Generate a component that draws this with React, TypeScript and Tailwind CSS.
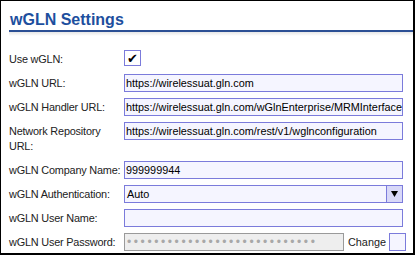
import React from "react";

const font = { fontFamily: '"Liberation Sans", Arial, sans-serif' };

function Row({ label, h = "h-[24px]", children }: { label: React.ReactNode; h?: string; children: React.ReactNode }) {
  return (
    <div className={`flex items-start ${h}`}>
      <div className="w-[115px] shrink-0 pt-[2px] text-[10.9px] tracking-[-0.2px] leading-[15px] text-[#222] whitespace-nowrap">{label}</div>
      <div className="flex-1 flex items-start">{children}</div>
    </div>
  );
}

function TextBox({ value }: { value: string }) {
  return (
    <div className="w-[279px] h-[18px] border border-[#7b7bdb] bg-[#f5f5ff] text-[10.85px] leading-[16px] text-black pl-[1px] overflow-hidden whitespace-nowrap">
      {value}
    </div>
  );
}

export default function App() {
  return (
    <div style={font} className="w-[415px] h-[256px] bg-white">
      <div className="w-[415px] h-[255px] border-t border-l border-black border-r-2 border-b-2 bg-white">
        <div className="ml-[8px] pt-[9px]">
          <div className="text-[16px] font-bold leading-[19px] text-[#1d4f9e] pl-[1px]">wGLN Settings</div>
          <div className="mt-[1px] h-[2px] bg-[#2b4f94]" />
          <div className="h-[4px] bg-gradient-to-b from-[#e6e6e6] to-white" />
        </div>
        <div className="pl-[8px] pt-[14px]">
          <Row label="Use wGLN:">
            <div className="w-[17px] h-[16px] border border-[#7b7bdb] bg-white flex items-center justify-center text-[13px] leading-none text-black" style={{ fontFamily: '"DejaVu Sans", sans-serif' }}>
              ✔
            </div>
          </Row>
          <Row label="wGLN URL:">
            <TextBox value="https://wirelessuat.gln.com" />
          </Row>
          <Row label="wGLN Handler URL:">
            <TextBox value="https://wirelessuat.gln.com/wGlnEnterprise/MRMInterface" />
          </Row>
          <Row label={<>Network Repository<br />URL:</>} h="h-[39px]">
            <TextBox value="https://wirelessuat.gln.com/rest/v1/wglnconfiguration" />
          </Row>
          <Row label="wGLN Company Name:">
            <TextBox value="999999944" />
          </Row>
          <Row label="wGLN Authentication:">
            <div className="w-[279px] h-[18px] border border-[#7b7bdb] bg-[#f5f5ff] flex">
              <div className="flex-1 text-[10.85px] leading-[16px] text-black pl-[2px]">Auto</div>
              <div className="w-[16px] h-full border-l border-[#7b7bdb] bg-[#d8d8f8] flex items-center justify-center">
                <svg width="7" height="6" viewBox="0 0 7 6"><path d="M0 0 L7 0 L3.5 6 Z" fill="#000" /></svg>
              </div>
            </div>
          </Row>
          <Row label="wGLN User Name:">
            <TextBox value="" />
          </Row>
          <Row label="wGLN User Password:">
            <div className="w-[220px] h-[18px] border border-[#9a9a9a] bg-[#eeeeee] text-[12px] leading-[16px] text-[#a8a8a8] pl-[2px] overflow-hidden whitespace-nowrap tracking-[2.6px]">
              {"•".repeat(28)}
            </div>
            <div className="ml-[4px] text-[10.85px] leading-[18px] text-[#222]">Change</div>
            <div className="ml-[3px] w-[17px] h-[18px] border border-[#7b7bdb] bg-[#f5f5ff]" />
          </Row>
        </div>
      </div>
    </div>
  );
}
